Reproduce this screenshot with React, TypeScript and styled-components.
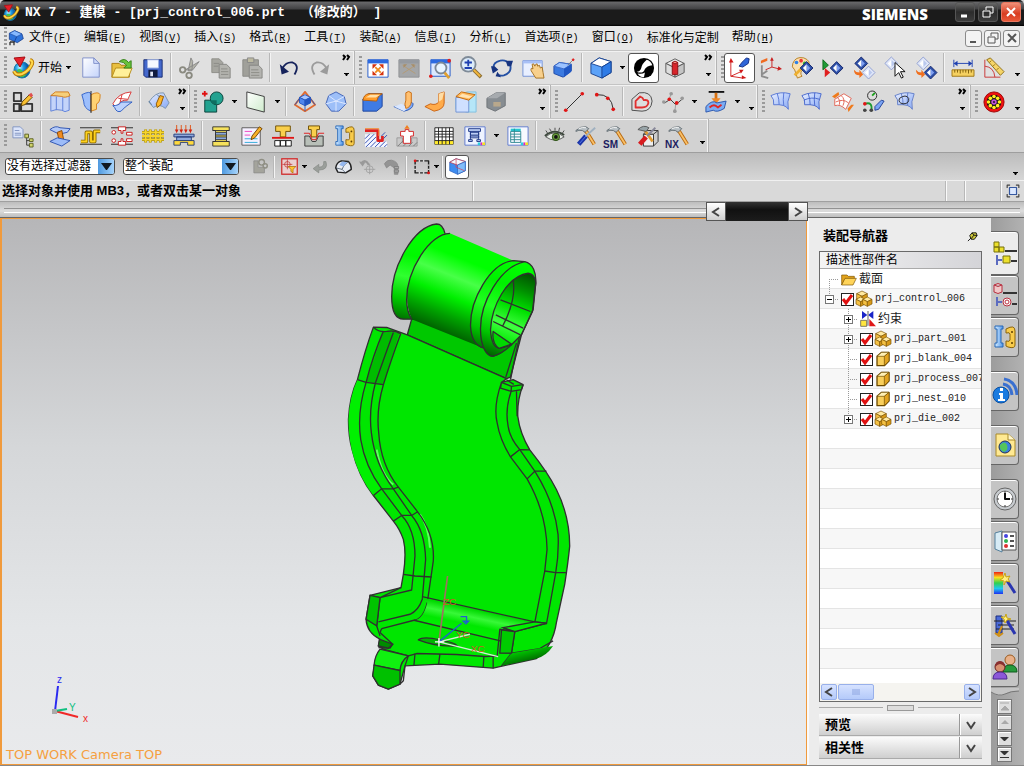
import React, { useState } from 'react';
import styled, { createGlobalStyle, css } from 'styled-components';

const sans = '"Liberation Sans", "Noto Sans CJK SC", sans-serif';
const mono = '"Liberation Mono", "Noto Sans CJK SC", monospace';

const Global = createGlobalStyle`
  html, body, #root { height: 100%; margin: 0; }
  * { box-sizing: border-box; }
  body { font: 12px/16px ${sans}; color: #000; overflow: hidden; background: #d6d6d6; }
  button, select, input { font: inherit; color: inherit; margin: 0; padding: 0; }
  button { border: 0; background: none; }
`;

/* ---------- icon data: [path, fill, stroke, stroke width] ---------- */
type Shape = [string, string?, string?, number?];
const o = (x: number, y: number, r: number) =>
  `M${x - r} ${y}a${r} ${r} 0 1 0 ${2 * r} 0a${r} ${r} 0 1 0 ${-2 * r} 0Z`;
const N = 'none';
const diamond = (x: number, y: number, pale = false): Shape[] => [
  [`M${x} ${y - 7}l7 7l-7 7l-7-7Z`, pale ? '#dfe6f8' : '#2d50a8', pale ? '#8d9cd0' : '#14246a'],
  [`M${x} ${y - 4}l4 4l-4 4Z`, pale ? '#b9c8ee' : '#7f9ff0'],
  [`M${x} ${y - 4}l-4 4l4 4Z`, '#fff'],
];
const cube = (x: number, y: number, s: number, a: string, b: string, c: string, line: string): Shape[] => [
  [`M${x} ${y - s}l${s} ${s / 2}l${-s} ${s / 2}l${-s} ${-s / 2}Z`, a, line],
  [`M${x - s} ${y - s / 2}l${s} ${s / 2}v${s}l${-s} ${-s / 2}Z`, b, line],
  [`M${x + s} ${y - s / 2}l${-s} ${s / 2}v${s}l${s} ${-s / 2}Z`, c, line],
];
const hammer: Shape[] = [
  ['M11 5L21 21', N, '#b8690f', 4],
  ['M11 5L21 21', N, '#f9c068', 2],
  ['M1 6q5-5 11-4l3 2l-4 4l-3-2q-4-1-7 1Z', '#b5bdc2', '#5f6a70'],
  ['M4 4q4-2 8-1', N, '#fff'],
];
const gridSheet = (line: string): Shape[] => [
  ['M1 5Q12 0 22 3Q18 12 20 20Q17 14 4 15Q5 9 1 5Z', 'url(#gSheet)', line],
  ['M8 3Q10 9 10 15M15 2Q14 10 15 16', N, line],
];
const globe: Shape[] = [
  [o(11, 14, 8), 'url(#gGlobe)', '#1a7fa8'],
  ['M6 14q4-3 6 2t5 1q-3 5-8 4Z', '#3fc653'],
  ['M3 15Q5 20 11 18Q18 15 21 8Q22 5 19 4', N, '#b97a08', 4],
  ['M3 15Q5 20 11 18Q18 15 21 8Q22 5 19 4', N, '#ffd84a', 2],
  ['M3 2L14 1L9 11Z', '#e8202a', '#a60d12'],
];
const clip: Shape[] = [
  ['M2 1h8v3h-2v14h2v4h-8v-4h2V4H2Z', 'url(#gBlue)', '#2768b8'],
  ['M13 4q9-5 9 2v14q0 4-7 2l-2-1v-5q4 1 4-1v-6q0-2-4-1Z', '#f8cb4c', '#8b640a'],
  [o(19, 7, 1), '#5e3f00'], [o(19, 18, 1), '#5e3f00'],
];

const icons: Record<string, Shape[]> = {
  globe,
  part: [['M2 5l8-4l11 5l2 7l-9 6l-12-5Z', '#2f74dc', '#0b2f7e'], ['M2 5l8-4l11 5l-8 4Z', '#86b8ff', '#1c4da4'], ['M13 10l-4 9', N, '#0b2f7e'], ['M3 18v5M3 18h6v5', N, '#333', 2]],
  new: [['M3 1h12l6 6v15H3Z', 'url(#gPaper)', '#7d8dc8'], ['M15 1v6h6Z', '#cfdafa', '#7d8dc8']],
  open: [['M1 7h8l2 2h9v13H1Z', '#e9c040', '#a87a0c'], ['M5 12h18l-4 10H1Z', '#fff09a', '#b58a18'], ['M9 5q6-5 10 1l3-2v8h-8l3-3q-3-4-8-4Z', '#69c23a', '#2f7d14']],
  save: [['M2 3h20v19H4l-2-2Z', '#4468cc', '#172a70'], ['M6 3h12v9H6Z', '#f5f8ff', '#9db0e0'], ['M7 14h10v8H7Z', '#111b3e'], ['M9 16h3v5H9Z', '#dfe5f5']],
  cut: [['M7 14L22 5l-7 9ZM10 15L13 1l2 4l-1 10Z', '#b3b3a8', '#888'], [o(4, 14, 3), N, '#8a8a80', 2], [o(11, 20, 3), N, '#8a8a80', 2]],
  copy: [['M2 2h8l4 4v11H2Z', '#a6a6a0', '#8b8b86'], ['M10 8h8l4 4v11H10Z', '#b3b3ae', '#868682'], ['M12 13h7M12 16h8M12 19h8M4 7h6M4 10h5', N, '#8b8b86']],
  paste: [['M2 3h17v18H2Z', '#a0a09a', '#8a8a84'], ['M7 1h7v5H7Z', '#bcb9a0', '#888'], ['M9 9h10l4 4v10H9Z', '#b4b4b0', '#858582'], ['M11 14h8M11 17h9M11 20h9', N, '#8b8b86']],
  undo: [['M5 12Q9 5 16 6Q24 9 18 19', N, '#16235c', 2], ['M2 8l2 11l8-3Z', '#16235c']],
  redo: [['M19 12Q15 5 8 6Q0 9 6 19', N, '#9b9b9b', 2], ['M22 8l-2 11l-8-3Z', '#9b9b9b']],
  fit: [['M1 3h22v19H1Z', '#fff', '#1c55c8'], ['M1 3h22v4H1Z', '#2c6ae0'], ['M9 11l6 6M15 11l-6 6', N, '#f08a1c', 2], ['M6 8h5l-5 5ZM18 8h-5l5 5ZM6 20h5l-5-5ZM18 20h-5l5-5Z', '#d63310']],
  fitsel: [['M1 3h22v19H1Z', '#a4a6a8', '#8f9194'], ['M1 3h22v4H1Z', '#969aa0'], ['M5 9l14 9M19 9L5 18', N, '#b59a72'], ['M6 8h4l-4 4ZM18 8h-4l4 4Z', '#a88e68']],
  zoomfit: [['M2 3h21v18H2Z', '#dbe8ff', '#1c55c8'], ['M2 3h21v4H2Z', '#2c6ae0'], [o(13, 12, 6), '#e8f4ff', '#7a8797', 2], ['M17 17l5 6', N, '#e0a030', 3], [o(2, 21, 2), '#e02020'], [o(22, 4, 2), '#e02020']],
  zoom: [[o(9, 8, 8), '#dcecfa', '#7f8b98', 2], ['M9 3v7M5 6h8M5 12h8', N, '#1d3fb0', 2], ['M15 14l8 8', N, '#8e7034', 4], ['M15 14l7 7', N, '#f3b73c', 2]],
  rotate: [['M3 15Q1 6 10 4Q14 3 17 5M21 9Q23 17 14 20Q10 21 7 19', N, '#2450a4', 2], ['M0 10l4 0l4 4l-6 4ZM16 4h8l-2 6l-4 0ZM11 22l-6-1l2-5Z', '#173480']],
  pan: [['M1 4h21v17H1Z', '#e8efff', '#6f8ed4'], ['M1 4h21v3H1Z', '#a8c0f6'], ['M10 15q-1-4 2-2l-1-5q2-2 3 2l1-2q2-2 2 2l2-1l1 3l2-1l1 6l1 6h-9Z', '#f8d08c', '#a26d1c']],
  persp: [['M1 10l6-4l13 2v7l-9 7l-10-4Z', '#3b7ae0', '#2049a6'], ['M1 10l6-4l13 2l-8 5Z', '#9cc3ff', '#3868c8'], ['M12 13v9l8-6v-8Z', '#1f57c4'], ['M16 9l6-6', N, '#777'], [o(22, 3, 1), '#e02020', '#e02020']],
  box: [['M1 7l9-6l13 4v12l-10 6l-12-5Z', '#5ca2f8', '#16418f'], ['M1 7l9-6l13 4l-10 6Z', '#fff', '#16418f'], ['M13 11v12l10-6V5Z', '#2f7ce6', '#16418f']],
  shade: [[o(12, 12, 11), '#000'], ['M15 3A9 9 0 0 1 21 9Q15 10 13 13Q12 17 8 17Q6 17 4 16Q8 16 9 12Q10 7 15 3Z', '#fff'], ['M13 16Q14 12 20 12Q20 19 13 21Z', '#000'], ['M5 18Q10 19 13 17L12 22Q7 22 5 18Z', '#fff']],
  section: [...cube(12, 12, 10, '#eee', '#ddd', '#c5c5c5', '#555'), ['M9 6h6v13H9Z', '#d8252b', '#8a0c10'], ['M9 6q3-3 6 0q-3 3-6 0', '#ff8a80', '#8a0c10']],
  csys: [['M2 4v17l13 2M2 21L13 16', N, '#d01818'], ['M0 6l2-5l3 5ZM11 14l5 0l-3 4ZM14 20l5 3l-5 1Z', '#d01818'], ['M11 10l3-4l5-5l3 1l-1 5l-6 4Z', '#2f65d8', '#132c80']],
  csys2: [['M13 2v9l8 2M13 11L6 14', N, '#c82020'], ['M2 9v12l7 2M2 19l6-4', N, '#8d8d8d', 2], ['M1 4l7-3v3l-7 3Z', '#ef6a20'], ['M11 4l2-4l2 4ZM20 10l4 3l-5 2Z', '#c82020']],
  palette: [['M2 7Q5-1 14 1Q22 4 19 10Q14 9 13 14Q9 17 12 21L7 23L4 14Q0 11 2 7Z', '#fae0ae', '#b57c20'], [o(6, 6, 2), '#2e80e8'], [o(11, 4, 2), '#e33'], [o(15, 7, 2), '#3a3'], ['M4 20l8-8', N, '#eeb030', 3], ...diamond(17, 12)],
  play: [['M1 3l6 6l-6 5Z', '#1f9a35', '#0d6a1c'], ['M3 12l6 5l-6 5Z', '#e02020'], ...diamond(16, 12)],
  swap: [...diamond(9, 7), ...diamond(17, 17, true), ['M1 14q2 3 6 3v-3l4 5l-4 4v-3q-6 0-6-6Z', '#f07020']],
  pick: [...diamond(8, 7, true), ['M12 6v15l4-4l3 6l2-1l-3-6h5Z', '#fff', '#000']],
  swap2: [...diamond(9, 7, true), ...diamond(17, 17), ['M1 14q2 3 6 3v-3l4 5l-4 4v-3q-6 0-6-6Z', '#f07020']],
  ruler: [['M2 3v8M22 3v8M2 7h20', N, '#1d3fb0'], ['M2 7l4-3v6ZM22 7l-4-3v6Z', '#1d3fb0'], ['M0 14h24v7H0Z', '#f5d060', '#9c7410'], ['M3 14v3M6 14v3M9 14v4M12 14v3M15 14v3M18 14v4M21 14v3', N, '#7a5a08']],
  angle: [['M2 3v19h17M2 10Q12 11 13 22', N, '#c83030'], ['M4 3l4-2l15 15l-4 4Z', '#f5d468', '#8b6a10'], ['M9 4l-2 2M13 8l-2 2M17 12l-2 2', N, '#8b6a10']],
  sketch: [['M2 2h8v9H2ZM2 14h6v8H2ZM10 14h12v8H10Z', N, '#333', 2], ['M11 12l8-8l3 3l-8 8l-4 1Z', '#f8c030', '#5c3c00'], ['M18 4l3-2l2 3l-2 2Z', '#e05050']],
  extrude: [['M2 5h20v16q-5 3-8 0q-6-2-12 1Z', '#c4d4fa', '#5b7ed8'], ['M2 5l5-4h14l2 4q-6 3-9 1q-6-1-12-1Z', '#f6cf7a', '#d17818'], ['M8 6v15M15 7v14', N, '#5b7ed8']],
  revolve: [['M2 4q10-5 10 0v18q-8-3-8-11Z', '#9dbffc', '#2e5fc8'], ['M12 4q8-4 10 0q0 9-4 10v6l-6 2Z', '#ffd272', '#d4801a'], ['M12 0v24', N, '#222']],
  sweep: [['M2 14Q8 2 22 1l-4 9Q10 9 6 18Z', '#fff', '#d83030'], ['M8 8l10 1M12 4l-2 8', N, '#d83030'], ['M2 16q7 0 9-4l12 0q-9 6-12 10Q6 24 4 18Z', '#bcd2fc', '#2858c0']],
  mesh: [['M1 12Q8 1 17 2l6 11l-4 6Q12 13 6 18Z', 'url(#gSheet)', '#7890a8'], ['M9 14l4-9l4 1l-3 9l-4 3Z', '#ffb628', '#8a5300'], ['M4 15l-3-4M10 4l3 3', N, '#587898']],
  unite: [['M3 10h13v13H3Z', '#22a290', '#083d36'], [o(16, 8, 7), '#22a290', '#083d36'], ['M9 10h7v5Q11 14 9 10Z', '#0d6f61'], ['M3 0v6M0 3h6', N, '#e01010', 2]],
  plane: [['M2 1l19 5v17L2 18Z', 'url(#gMint)', '#333']],
  pyramid: [['M12 1L1 15l11 7l11-7Z', N, '#e06a30', 2], ['M1 15l5-7M12 22v-6M23 15l-5-7', N, '#2b57b8'], ...cube(12, 10, 6, '#a7c6ff', '#4f86ec', '#2356c0', '#2356c0')],
  poly: [['M12 1l9 5l2 8l-8 8l-8 0l-6-8l3-9Z', '#9dbff8', '#3d5fb4'], ['M4 5l8 6l9-5M12 11l-11 3M12 11l11 3M12 11v11', N, '#e2ebff']],
  edge: [['M1 9l6-6h15v14l-6 5H1Z', '#3f7be4', '#1b429a'], ['M1 10q1-6 6-7h15q-5 2-6 8Z', '#ff9c2a', '#b65d08'], ['M4 7l5-3h11l-5 3Z', '#ffe0a8']],
  flange: [['M1 17l11 5q10-2 10-8q-2-4-8 2Z', '#7da8f4', '#2a58b8'], ['M1 17l8-3l8 4l-5 4Z', '#d8e6ff'], ['M14 2q3-3 6 0v10q-1 6-6 7q-2-5 0-9Z', '#ffc070', '#c86a10']],
  bend: [['M1 17l10 5q11-2 11-9V1l-6 2v9q-3 4-9 2Z', '#ffab4a', '#c86010'], ['M16 3l6-2l-2 8l-4 3Z', '#ffdca4']],
  corner: [['M1 8l12-7h10v22H13L1 20Z', '#b5e6f8', '#7fc0df'], ['M1 7h14v16H1Z', '#cfe0ff', '#6e90d2'], ['M1 6l6-5l15 3l-7 6Z', '#ffb95a', '#c36508'], ['M4 6l4-3l11 3l-4 2Z', '#ffe3b4']],
  block: [['M1 8l10-6h10v14l-11 6l-9-4Z', '#878d92', '#6f7377'], ['M1 8l10-6h10l-9 6Z', '#a6aaae'], ['M8 12h8v5H8Z', '#b9a88c']],
  line: [['M3 21L21 3', N, '#222'], [o(3, 21, 2), '#e01515'], [o(21, 3, 2), '#e01515']],
  arc: [['M3 4Q19 3 21 20', N, '#222'], [o(3, 4, 2), '#e01515'], [o(15, 8, 2), '#e01515'], [o(21, 20, 2), '#e01515']],
  offset: [['M1 21V9L9 2Q22 0 23 11Q22 22 12 22Z', '#ddd', '#444'], ['M5 18v-7l5-5q3 1 4 4q5-1 5 3q-1 5-7 5Z', N, '#e03030', 2]],
  spline: [['M3 13l6-4l6 6l8-7', N, '#333'], ['M8 9l2-7M15 14l-1 8M3 13l-2-2', N, '#999'], [o(2, 12, 2), '#999'], [o(22, 8, 2), '#999'], [o(10, 3, 2), '#999'], [o(14, 22, 2), '#999'], [o(8, 9, 2), '#e01515'], [o(16, 13, 2), '#e01515']],
  press: [['M4 1h17', N, '#111', 2], ['M12 2v7', N, '#d87010', 3], ['M7 8h10l-5 6Z', '#ee8828'], ['M1 17q7-8 12-4l10-2l-2 8q-8 5-12 2l-8 2Z', '#7dacf2', '#2552ab'], ['M5 18q5-5 9 0l4-3', N, '#e02525', 2]],
  sheet1: gridSheet('#5474d4'),
  sheet2: [...gridSheet('#4465cc'), ['M3 10Q12 6 20 9', N, '#4465cc']],
  sheet3: [['M3 9L13 3l8 5l-6 12Q9 14 3 16Z', '#fff', '#e06050'], ['M6 7q4 3 2 8M10 5q5 4 2 11M4 12q8-4 14 1', N, '#e06050'], ['M0 6l7-5l1 3l-5 4ZM24 15l-6 8l-1-4l4-4Z', '#ef7a1c']],
  measure: [[o(10, 5, 5), '#ddd', '#222'], ['M10 5l3-3', N, '#1aa01a', 2], ['M2 14Q11 11 9 22', N, '#1a9a30', 2], [o(2, 14, 2), '#e01515'], [o(2, 21, 2), '#444'], [o(9, 21, 2), '#444'], ['M13 17l7-7l3 1l-6 9l-4 1Z', '#7aa4f4', '#1c3c94']],
  sheet4: [...gridSheet('#5f7cc8'), ['M6 8q7-5 10 0q1 6-6 6q-6-1-4-6Z', N, '#222']],
  wheel: [[o(12, 12, 11), '#f01010', '#900'], [o(12, 12, 8), '#111'], ...[[12, 6], [16, 8], [18, 12], [16, 16], [12, 18], [8, 16], [6, 12], [8, 8]].map(([x, y]): Shape => [o(x, y, 2), '#ffee20']), [o(12, 12, 3), '#c050d8'], [o(12, 12, 1), '#111']],
  doctree: [['M1 2h8l3 3v9H1Z', '#dce5fa', '#7f92c0'], ['M3 6h5M3 9h7M3 11h7', N, '#7f92c0'], ['M16 12v10h4M16 17h4', N, '#333'], ['M14 10h4v4h-4ZM19 15h4v3h-4ZM19 20h4v4h-4Z', '#cfd36a', '#5b5f22']],
  die: [['M1 5Q7 0 12 3l11 1l-3 4l-9 2Z', '#b4caf8', '#2a50b0'], ['M9 8l5-2l2 10l-5 1Z', '#f08c20', '#8a4700'], ['M1 18l8-4l14 3l-9 6Z', '#9dbcf8', '#2a50b0']],
  strip: [['M0 3h24M0 21h24', N, '#222'], ['M1 18h6V8h5v10h4V7h6', N, '#8b6a00', 4], ['M1 18h6V8h5v10h4V7h6', N, '#ffd21e', 2]],
  layout: [['M0 3h24M0 21h24', N, '#222'], ['M8 2h8v4h-3v3h-2V6H8ZM8 22h8v-4h-3v-3h-2v3H8ZM17 8h6v3h-6ZM17 15h6v3h-6Z', '#fff', '#c81414'], [o(3, 8, 2), '#fff', '#c81414'], [o(3, 17, 2), '#fff', '#c81414']],
  strip2: [['M0 8h24M0 12h24M0 16h24M4 5v14M9 5v14M15 5v14M20 5v14', N, '#8a7400', 3], ['M0 8h24M0 12h24M0 16h24M4 5v14M9 5v14M15 5v14M20 5v14', N, '#f7d52e', 2]],
  load: [['M4 0v6M9 0v6M14 0v6M19 0v6', N, '#e05010'], ['M2 5h4l-2 4ZM7 5h4l-2 4ZM12 5h4l-2 4ZM17 5h4l-2 4Z', '#d02010'], ['M1 10h22v3H1ZM4 13h16v4H4Z', '#8fa9dc', '#223a78'], ['M1 17h22v5h-7v-3H8v3H1Z', '#ffd93c', '#223a78']],
  base: [['M3 2h18v4h-3v12h3v5H3v-5h3V6H3Z', '#f6e25c', '#333'], ['M6 8h12v3H6ZM6 13h12v3H6Z', '#89a8dc', '#333'], ['M3 6h18M3 18h18', N, '#333']],
  note: [['M1 3h20v19H1Z', '#f5f1ff', '#555'], ['M4 7h8M4 11h6', N, '#ef40c0'], ['M4 15h14M4 19h14', N, '#28a8d8'], ['M12 12l8-10l3 2l-8 10l-4 2Z', '#f9b128', '#6c4100']],
  punch: [['M4 1h16v6h-5v6H9V7H4Z', '#f9cf4c', '#6b4c00'], ['M0 14h24', N, '#e01515', 2], ['M3 17h6v6H3ZM15 17h6v6h-6ZM9 17h6v6H9Z', '#fff', '#111']],
  form: [['M6 1h12v4h-3v8H9V5H6Z', '#f9cf4c', '#6b4c00'], ['M2 12h5l3 6h4l3-6h5v11H2Z', '#b8bfb8', '#333'], ['M1 9h6l3 7h4l3-7h6', N, '#e01515']],
  clip,
  hatch: [['M0 10h12v8h12v6H0Z', '#f4f6ff'], ['M0 15l5-5M0 20L10 10M1 24L12 13M6 24l6-6M11 24l6-6M16 24l6-6M21 24l3-3M18 12l4-4M20 15l4-4', N, '#2a48b0'], ['M0 6h14v11h5v-5', N, '#e02020', 3], ['M0 4h15v8', N, '#f4862a']],
  insert: [['M1 14h6v5h10v-5h6v9H1Z', '#c9c9c9', '#999'], ['M2 23l6-6M8 23l4-4M14 23l4-4M19 23l4-4', N, '#777'], ['M5 7h5V5h4v2h5v5h-3v8H8v-8H5Z', '#fff', '#d42020'], ['M9 4l3-4l3 4Z', '#f08020']],
  table: [['M2 3h20v18H2Z', '#fff', '#222'], ['M2 17h20v4H2Z', '#ffe92c'], ['M2 7h20M2 10h20M2 13h20M2 17h20M6 3v18M10 3v18M14 3v18M18 3v18', N, '#222']],
  baselib: [['M1 2h22v20H1Z', '#eef3ff', '#5b77ce'], ['M5 4h13v3H5ZM7 8h9v3H7ZM7 12h9v2H7ZM5 16h4v2H5ZM14 16h4v2h-4ZM7 7v9M16 7v9', '#bed0f6', '#1e3786'], ['M15 19h3v3h-3Z', '#2ad0e0'], ['M18 19h2v3h-2Z', '#e020c0'], ['M20 19h3v3h-3Z', '#f8e020']],
  tablelib: [['M1 2h22v20H1Z', '#f6f9ff', '#5b77ce'], ['M4 4h11v3H4Z', '#28c8d0'], ['M4 7h11v12H4ZM4 10h11M4 13h11M4 16h11M8 4v15', N, '#2d8890'], ['M15 19h3v3h-3Z', '#2ad0e0'], ['M18 19h2v3h-2Z', '#e020c0'], ['M20 19h3v3h-3Z', '#f8e020']],
  eye: [['M2 13Q11 4 22 13Q12 20 2 13Z', '#e9efe9', '#555'], [o(13, 13, 4), '#6b9c3e', '#254a10'], [o(13, 13, 2), '#111'], ['M1 12Q11 3 22 11', N, '#3a463a', 2], ['M4 9L2 6M8 7L6 4M12 6V3M16 7l1-4M20 9l2-3', N, '#444']],
  tools: [...hammer, ['M4 21L12 12', N, '#1a34a8', 5], ['M5 20L12 12', N, '#5a7cf0'], ['M12 12l10-9', N, '#9fb0c0', 2]],
  hammer,
  kit: [['M7 10h11v13H7Z', '#eee', '#333'], ['M7 10l4-4h12v12l-5 5V10ZM18 10l5-4', '#ccc', '#333'], ['M8 5l9 13', N, '#e09a30', 3], ['M1 5q6-6 12-2l-3 4Z', '#98a4a8', '#555'], ['M3 21l7-8', N, '#d81c20', 5], ['M11 12l9-9', N, '#889', 2]],
  links: [['M4 4h6v9h9v8H4Z', '#a4a49c', '#888'], [o(15, 6, 4), N, '#8f8f84', 2], [o(20, 11, 3), N, '#8f8f84', 2]],
  snap: [['M1 1h22v22H1Z', '#ead0d0', '#d04040', 2], [o(9, 9, 4), N, '#c03030'], ['M9 2v14M2 9h14', N, '#c03030'], ['M10 12h11l-4 4v5l-3-2v-3Z', '#ffc430', '#a86d00']],
  back: [['M21 5q4 12-10 12v4L3 15l8-6v4q8 0 7-8Z', '#9b9f9b', '#858985']],
  eraser: [['M1 14Q2 6 9 4L19 5Q23 9 23 16L15 21L4 20Z', '#e8ecf4', '#222', 2], ['M1 14l9 2q1-6 9-11M10 16l5 5', N, '#345'], ['M10 5l8 1q-4 2-6 6l-6-2Z', '#95b8f0']],
  target: [['M3 8q6-8 11 2', N, '#999', 3], ['M0 5l5 7l4-6Z', '#999'], [o(15, 16, 5), N, '#999'], ['M15 8v15M7 16h16', N, '#999']],
  hand: [['M2 8q4-6 10-5q9 2 9 9v11h-5v-9l-6-4l-5 4Z', '#949494', '#858585'], ['M16 12h6v3h-6ZM16 17h6v3h-6Z', '#aaa', '#777']],
  marquee: [['M3 4h19v17H3Z', N, '#222', 2], ['M8 4h2M14 4h2M8 21h2M14 21h2M3 9v2M3 15v2M22 9v2M22 15v2', N, '#d6d6d6', 3], [o(3, 4, 2), '#e01515'], [o(22, 21, 2), '#e01515']],
  cubeSmall: [['M1 6l9-5l13 4v13l-11 5l-11-5Z', '#3d8cf0', '#2b62c0'], ['M1 6l9-5l13 4l-11 5Z', '#f4f8ff', '#c03040'], ['M12 10v13l11-5V5Z', '#82bdfa', '#2b62c0'], ['M10 1v12l12 5', N, '#d04058']],
  folder: [['M1 6h8l2 2h9v4H6l-5 9Z', '#e3a41c', '#7a5200'], ['M6 11h17l-5 10H1Z', '#ffd45a', '#7a5200']],
  asm: [...cube(9, 8, 8, '#ffe9a0', '#f5c143', '#d89a18', '#7a5200'), ...cube(7, 16, 7, '#ffe9a0', '#f5c143', '#d89a18', '#7a5200'), ...cube(17, 16, 7, '#ffe9a0', '#f5c143', '#d89a18', '#7a5200')],
  solid: [['M3 8l7-6h11v13l-7 7H3Z', '#f9cf5c', '#6d4b00', 2], ['M3 8l7-6h11l-7 6Z', '#fff0b4', '#6d4b00'], ['M14 8v14l7-7V2Z', '#e0a321', '#6d4b00']],
  constraint: [['M3 0v12l8-6ZM20 0v12l-8-6Z', '#1a25c8'], ['M11 0h2v22h-2Z', '#888'], ['M1 14h9v9H1Z', '#ffe640', '#444'], ['M14 12l10 11H14Z', '#e01818']],
  navAsm: [['M1 6h5v5H1ZM1 1h5v5H1ZM6 6h5v5H6Z', '#ece02c', '#77700c'], ['M12 10h12', N, '#333', 2], ['M4 14v10M4 19h5', N, '#5c6cc0', 2], ['M10 15h7v7h-7Z', '#ece02c', '#77700c'], ['M18 20h6', N, '#333', 2]],
  navCon: [['M1 2q4-3 8 0v7q-4 3-8 0ZM1 2q4 3 8 0', '#f0c8c8', '#b83040'], ['M10 10h14', N, '#333', 2], ['M4 14v9M4 19h5', N, '#5c6cc0', 2], [o(14, 19, 4), '#fff', '#b83040'], [o(14, 19, 2), N, '#b83040'], ['M19 21h5', N, '#333', 2]],
  info: [[o(8, 16, 8), '#1a7be0', '#0c4fa0'], ['M7 9h3v3H7ZM6 14h4v6h2v2H5v-2h2v-4H6Z', '#fff'], ['M10 5q8 1 9 11M11 0q12 2 13 16', N, '#3a70d0', 3]],
  web: [['M3 1h12l7 6v16H3Z', '#ffe992', '#a98a2a'], ['M15 1v6h7', '#fff6cc', '#a98a2a'], [o(12, 14, 6), '#3a7fe0', '#235'], ['M7 12q5-5 7 0t-3 7q-5-2-4-7Z', '#55c45a']],
  clock: [[o(12, 12, 11), '#c8ccd0', '#666'], [o(12, 12, 8), '#fff', '#777'], ['M12 6v6h5', N, '#111', 2], ['M12 4v2M12 18v2M4 12h2M18 12h2', N, '#333']],
  roles: [['M2 4l7-2v21l-7-3Z', '#d7ebf5', '#55809c'], ['M9 3h14v18H9Z', '#fff', '#555'], [o(13, 7, 2), '#4444e0'], [o(13, 12, 2), '#30b050'], [o(13, 17, 2), '#e03030'], ['M17 7h4M17 12h4M17 17h4', N, '#555', 2]],
  spectrum: [['M1 1h9v22H1Z', 'url(#gSpectrum)'], ['M13 8l9 14', N, '#2a35b0', 3], ['M12 2l1 4l4-1l-2 3l2 3l-4-1l-2 4v-4l-4-1l3-2Z', '#fff080', '#c9a414']],
  process: [['M3 3h6v17H3Z', '#4b6bd8', '#1b2c80'], ['M1 8h22M5 12h16M3 16h18', N, '#222'], ['M9 13l-4 9M2 20l4 3l4-3', N, '#d09018', 2], ['M13 6l9 15', N, '#2a35b0', 3], ['M13 1l1 4l4 1l-4 1l-2 3l-1-4l-3-2h4Z', '#fff080', '#c9a414']],
  people: [[o(17, 5, 5), '#e8b088', '#9a5c20'], ['M10 17q0-7 7-7t7 7Z', '#279a3c', '#0e5c1c'], [o(7, 12, 5), '#d89070', '#6a2020'], ['M2 12q0-6 5-6t5 6q-3-3-5-3t-5 3Z', '#8a3030'], ['M0 24q0-7 7-7t7 7Z', '#8c58d8', '#4d2a90']],
  fullscreen: [['M2 7V2h5M17 2h5v5M22 17v5h-5M7 22H2v-5', N, '#444', 2], ['M6 6h12v12H6Z', '#dbe8ff', '#3558a0', 2]],
  pin: [['M9 15L2 22', N, '#111', 2], ['M6 10l5-6h9l2 6l-6 8h-7Z', '#cfc93a', '#111', 2], ['M11 4l4 5l7 1M15 9l-6 8', N, '#111', 2]],
};

const Svg = styled.svg`display: block; flex: none; overflow: visible;`;
const Icon = ({ name, size = 24 }: { name: string; size?: number }) => (
  <Svg width={size} height={size} viewBox="0 0 24 24" aria-hidden>
    {icons[name].map(([d, f = 'none', s = 'none', w = 1], i) => (
      <path key={i} d={d} fill={f} stroke={s} strokeWidth={w} strokeLinejoin="round" />
    ))}
  </Svg>
);

const HiddenSvg = styled.svg`position: absolute;`;
const stops = (...c: string[]) => c.map((v, i) => <stop key={i} offset={i / (c.length - 1)} stopColor={v} />);
const Defs = () => (
  <HiddenSvg width="0" height="0" aria-hidden>
    <defs>
      <radialGradient id="gGlobe" cx=".35" cy=".35">{stops('#b8f4ff', '#1f9be0', '#0c55a8')}</radialGradient>
      <linearGradient id="gSheet" x2="1" y2="1">{stops('#eaf0ff', '#86a8f6')}</linearGradient>
      <linearGradient id="gBlue">{stops('#d8eeff', '#4f94e8')}</linearGradient>
      <linearGradient id="gPaper" x2="1" y2="1">{stops('#ffffff', '#c5d4fb')}</linearGradient>
      <linearGradient id="gMint" x2="1" y2="1">{stops('#ffffff', '#cfeccd')}</linearGradient>
      <linearGradient id="gSpectrum" x2="0" y2="1">{stops('#f02010', '#f8e020', '#30d050', '#20c8f0', '#2030f0')}</linearGradient>
    </defs>
  </HiddenSvg>
);

/* ---------- frame ---------- */
const Frame = styled.div`display: flex; flex-direction: column; height: 100vh; min-height: 600px; border-bottom: 1px solid #888;`;

const TitleBar = styled.header`
  display: flex; align-items: center; height: 26px; flex: none; padding: 0 3px 0 2px;
  background: linear-gradient(#000 0, #000 1px, #68686a 2px, #424244 9px, #1b1b1b 10px, #1b1b1b 24px, #000);
  color: #fff; border-radius: 5px 5px 0 0;
`;
const Title = styled.h1`flex: 1; margin: 0 0 0 5px; font: bold 13px/20px ${mono}; white-space: pre;`;
const Brand = styled.span`font: 800 15px/20px "Open Sans", sans-serif; margin-right: 24px; padding-top: 2px;`;
const WinButton = styled.button<{ $close?: boolean }>`
  width: 20px; height: 20px; margin: -3px 0 0 3px; display: grid; place-items: center;
  border: 1px solid ${p => (p.$close ? '#e8765e' : '#555')}; border-radius: 3px;
  background: ${p => (p.$close ? 'linear-gradient(#f09078, #d83c20 60%, #e85838)' : 'linear-gradient(#686868, #2c2c2c 50%, #3c3c3c)')};
`;

const MenuBar = styled.nav`
  display: flex; align-items: center; height: 24px; flex: none; padding: 0 4px 0 0;
  background: #e7e7e7;
`;
const MenuIcon = styled.span`display: flex; margin: 0 5px 0 1px;`;
const Menus = styled.div`display: flex; flex: 1; gap: 13px;`;
const MenuItem = styled.button`
  font-size: 12px; line-height: 16px; white-space: nowrap;
  span { font: 10px/16px ${mono}; }
`;
const DocButton = styled.button`
  width: 17px; height: 17px; margin-left: 2px; display: grid; place-items: center;
  border: 1px solid #8a8a8a; border-radius: 3px; background: #f3f3f3;
`;

const Row = styled.div<{ $tone: string }>`
  display: flex; height: 34px; flex: none;
  border-top: 1px solid #c4c4c4; box-shadow: inset 0 1px #f2f2f2; background: ${p => p.$tone};
`;
const Group = styled.div<{ $w?: number }>`
  display: flex; align-items: center; min-width: 0;
  ${p => (p.$w ? css`flex: 0 0 ${p.$w}px;` : css`flex: 1;`)}
  border-right: 1px solid #b4b4b4; box-shadow: inset -1px 0 #f2f2f2;
  &:last-child { border-right: 0; box-shadow: none; }
`;
const Grip = styled.i`
  width: 3px; height: 23px; margin: 0 0 0 4px; flex: none;
  background: repeating-linear-gradient(#9a9a9a 0 2px, transparent 2px 4px);
`;
const Tool = styled.button<{ $on?: boolean; $small?: boolean }>`
  position: relative; display: grid; place-items: center; flex: none;
  width: ${p => (p.$small ? 24 : 31)}px; height: ${p => (p.$small ? 24 : 30)}px;
  ${p => p.$on && css`background: #fff; border: 1px solid #555; border-radius: 3px;`}
`;
const Tag = styled.span`
  position: absolute; left: 2px; bottom: 1px; font: bold 10px/10px ${sans}; color: #1c1c60;
`;
const Sep = styled.i<{ $h: number }>`
  flex: none; width: 2px; height: ${p => p.$h}px; margin: 0 2px; background: #f4f4f4; border-left: 1px solid #b8b8b8;
`;
const Drop = styled.button<{ $w: number }>`
  flex: none; width: ${p => p.$w}px; height: 24px; display: grid; place-items: center;
`;
const More = styled.button<{ $bare?: boolean }>`
  display: flex; flex-direction: column; align-items: center; justify-content: space-between; align-self: flex-start;
  flex: none; width: 16px; height: 23px; margin: 3px 0 0 ${p => (p.$bare ? '0' : 'auto')};
  svg:only-child { margin-top: auto; }
`;
const StartButton = styled.button`
  display: flex; align-items: center; gap: 3px; width: 68px; flex: none; padding-left: 4px; white-space: nowrap;
`;

const Tri = () => <Svg width="7" height="4"><path d="M1 0h5v1H5L4 3H3L2 1H1Z" fill="#000" /></Svg>;
const Chevrons = () => <Svg width="9" height="7"><path d="M1 1l2 2L1 6M5 1l2 2L5 6" fill="none" stroke="#000" strokeWidth="2" /></Svg>;
const Overflow = ({ bare }: { bare?: boolean }) => (
  <More aria-label="More commands" $bare={bare}>{!bare && <Chevrons />}<Tri /></More>
);

const tags: Record<string, string> = { 'hammer:SM': 'SM', 'hammer:NX': 'NX' };
const Tools = ({ items, small }: { items: string; small?: boolean }) => (
  <>
    {items.split(' ').map((item, i) => {
      if (item === '|') return <Sep key={i} $h={small ? 22 : 29} />;
      if (item === 'v') return <Drop key={i} $w={small ? 6 : 12} aria-label="Options"><Tri /></Drop>;
      const on = item[0] === '*';
      const name = on ? item.slice(1) : item;
      return (
        <Tool key={i} $on={on} $small={small} aria-label={name} aria-pressed={on || undefined}>
          <Icon name={name.split(':')[0]} size={small ? 17 : 22} />
          {tags[name] && <Tag>{tags[name]}</Tag>}
        </Tool>
      );
    })}
  </>
);

const FilterBar = styled.div`
  display: flex; align-items: center; height: 28px; flex: none; padding-left: 5px;
  border-top: 1px solid #9e9e9e; background: linear-gradient(#bcbcbc, #d6d6d6);
  ${More} { margin-left: auto; margin-right: 1px; margin-top: 0; }
`;
const SelectBox = styled.label<{ $w: number }>`
  position: relative; display: flex; width: ${p => p.$w}px; margin-right: 8px; flex: none;
  select {
    appearance: none; width: 100%; height: 17px; padding: 0 0 0 1px; font-size: 12px; line-height: 15px;
    border: 1px solid #4a4a4a; border-radius: 3px; background: #fff; outline: 0;
  }
`;
const SelectArrow = styled.span`
  position: absolute; top: 1px; right: 1px; width: 16px; height: 15px; display: grid; place-items: center;
  border-radius: 0 2px 2px 0; background: linear-gradient(90deg, #4f9ae0, #a5d3fb); pointer-events: none;
`;
const FilterSelect = ({ label, width, options }: { label: string; width: number; options: string[] }) => (
  <SelectBox $w={width}>
    <select aria-label={label}>{options.map(v => <option key={v}>{v}</option>)}</select>
    <SelectArrow><Svg width="11" height="7"><path d="M0 0h11L6 7H5Z" fill="#101820" /></Svg></SelectArrow>
  </SelectBox>
);

const CueBar = styled.div`
  display: flex; align-items: stretch; height: 22px; flex: none; background: #d9d9d9;
  border-top: 1px solid #f0f0f0; border-bottom: 1px solid #a0a0a0;
`;
const CueText = styled.p`flex: 0 0 473px; margin: 0; padding-left: 2px; white-space: pre; font: bold 13px/20px ${sans};`;
const StatusCell = styled.div<{ $w?: number }>`
  ${p => (p.$w ? css`flex: 0 0 ${p.$w}px;` : css`flex: 1;`)}
  border-left: 1px solid #fafafa; box-shadow: -1px 0 #b8b8b8; display: grid; place-items: center;
`;
const Rail = styled.div`
  position: relative; height: 16px; flex: none; padding: 6px 4px 0; border-bottom: 1px solid #666;
  background: linear-gradient(#bdbdbd, #dcdcdc 60%, #bfbfbf);
  &::before { content: ''; display: block; height: 3px; border-top: 1px solid #929292; border-bottom: 1px solid #fff; }
`;
const RailHandle = styled.div`
  position: absolute; right: 216px; top: 0; z-index: 2; display: flex; width: 102px; height: 19px;
  background: linear-gradient(#333, #111 40%, #1c1c1c);
  justify-content: space-between;
`;
const RailButton = styled.button`
  width: 20px; display: grid; place-items: center; border: 1px solid #555; background: linear-gradient(#fff, #cfcfcf);
`;
const Chevron = ({ dir }: { dir: 'left' | 'right' | 'down' }) => (
  <Svg width="10" height="10">
    <path d={dir === 'left' ? 'M8 1L2 5l6 4' : dir === 'right' ? 'M2 1l6 4l-6 4' : 'M1 2l4 6l4-6'} fill="none" stroke="#444" strokeWidth="2" />
  </Svg>
);

const Main = styled.main`display: flex; flex: 1; min-height: 0; background: #ececec;`;
const Viewport = styled.section`
  position: relative; flex: 1; min-width: 0; overflow: hidden; border: 1px solid #f09a3c; border-left-width: 2px;
  display: flex; flex-direction: column; justify-content: flex-end;
  background: linear-gradient(#b6b6b8, #d5d7d9 42%, #e4e6e8 75%, #e9eaec);
`;
const Scene = styled.svg`position: absolute; inset: 0; width: 100%; height: 100%;`;
const Triad = styled.svg`display: block; margin-left: 40px; font: 10px ${sans};`;
const CameraLabel = styled.p`margin: 18px 0 0 4px; font: 13px/18px "DejaVu Sans", sans-serif; color: #f5a040;`;

const K = { fill: 'none', stroke: '#303030', strokeWidth: 4, strokeLinejoin: 'round' as const };
const Model = () => (
  <Scene viewBox="2 219 804 546" role="img" aria-label="prj_control_006">
    <defs>
      <linearGradient id="barrel" gradientUnits="userSpaceOnUse" x1="430" y1="80" x2="320" y2="350">
        {stops('#00ff00', '#00ff00', '#48ff48', '#00f000', '#00a000', '#005800')}
      </linearGradient>
      <linearGradient id="rim" gradientUnits="userSpaceOnUse" x1="250" y1="50" x2="190" y2="300">
        {stops('#00ff00', '#00f800', '#30ff30', '#00d000', '#007000')}
      </linearGradient>
      <linearGradient id="rimR" gradientUnits="userSpaceOnUse" x1="540" y1="130" x2="430" y2="410">
        {stops('#00ff00', '#00f000', '#20ff20', '#00c800', '#005000')}
      </linearGradient>
      <linearGradient id="bore" gradientUnits="userSpaceOnUse" x1="570" y1="160" x2="490" y2="370">
        {stops('#005000', '#009000', '#00e000', '#40ff40', '#00e800')}
      </linearGradient>
      <linearGradient id="tray" gradientUnits="userSpaceOnUse" x1="400" y1="1170" x2="385" y2="1240">
        {stops('#00d800', '#38f838', '#00e800', '#00f000')}
      </linearGradient>
      <linearGradient id="under" gradientUnits="userSpaceOnUse" x1="550" y1="1290" x2="560" y2="1330">
        {stops('#00d000', '#006800')}
      </linearGradient>
    </defs>
    <g transform="translate(340 220) scale(.33333)">
      {/* neck between barrel and plate */}
      <path d="M215 298L202 345L500 477L512 472L545 345L450 300Z" {...K} fill="#00c800" />
      <path d="M530 370L498 472M540 345L512 480" {...K} />
      {/* plate with both flanges */}
      <path d="M100 322L140 323L202 345L500 477L485 488L520 480L550 495Q532 540 534 590Q540 640 570 691Q625 760 650 810Q690 890 690 980Q685 1030 675 1095L650 1210Q640 1280 590 1318L490 1340L460 1347L300 1335L195 1340L180 1395L145 1410L115 1398L98 1370L105 1330L130 1290L115 1280L120 1260Q80 1240 78 1200L90 1128L183 1105L190 1065Q200 1000 190 960Q180 930 160 905L100 828Q55 770 36 690Q25 650 25 600Q28 530 52 480Q75 390 100 322Z" {...K} fill="#00e600" />
      <path d="M130 334L178 340L130 495L78 488Z" fill="#00bc00" />
      <path d="M52 480L78 488Q60 540 58 610Q62 680 90 745L125 808L100 828Q25 730 25 600Q28 530 52 480Z" fill="#00f000" />
      <path d="M110 690Q125 770 160 795M240 885Q266 920 270 985" fill="none" stroke="#60ff60" strokeWidth="6" />
      <path d="M100 322Q115 338 140 335Q165 330 182 342M130 334Q98 410 78 488Q50 580 62 660Q75 740 125 808L185 888Q225 930 225 1010L215 1112L120 1135L183 1105" {...K} />
      <path d="M160 338Q130 420 106 490Q85 570 94 640Q105 735 160 808L215 888Q255 935 257 1020L247 1140Q235 1175 210 1185L115 1208M182 342Q150 430 130 495Q108 570 116 640Q122 735 175 803L233 877Q285 945 280 1025L262 1150Q250 1200 222 1203L125 1228" {...K} />
      <path d="M52 480L78 488L130 495M100 828L125 808L160 808L175 803M160 905L185 888L215 888L233 877M190 1065L225 1070L275 1073M90 1128L120 1135L110 1220L120 1250M78 1200L110 1208" {...K} />
      {/* right flange */}
      <path d="M485 488Q460 560 472 610Q480 660 512 712L562 778Q620 880 622 990L615 1055L585 1210M514 515Q495 570 505 620Q510 655 540 690L585 755Q645 850 655 945Q658 1000 648 1060L620 1215M485 488L482 505L514 515L545 510L550 495M485 488L515 500L550 495M515 500L514 515M500 480L522 494" {...K} />
      <path d="M512 712L540 690L570 691M562 778L585 755L620 755M615 1055L648 1060L680 1060M530 515L532 590" {...K} />
      {/* tray */}
      <path d="M262 1150Q250 1200 222 1203L440 1255L485 1266L490 1225L585 1208L247 1135Z" fill="url(#tray)" />
      <path d="M247 1132L585 1208L620 1212M222 1203L485 1266M125 1228L120 1240L158 1275L150 1287L115 1285M130 1290L205 1310L230 1303L350 1306L435 1312L472 1311L480 1230L525 1237L620 1212M490 1225L525 1237L515 1302L485 1340M480 1300L515 1302L600 1288L640 1265" {...K} />
      <path d="M515 1302L640 1280Q620 1310 590 1318L485 1340Z" fill="url(#under)" />
      <path d="M490 1225L585 1208L620 1212L525 1237Z" fill="#00f000" stroke="#303030" strokeWidth="4" />
      <path d="M485 1232L525 1237L515 1302L480 1302Z" fill="#00cc00" stroke="#303030" strokeWidth="4" />
      <path d="M115 1280L118 1260L158 1275L145 1287Z" fill="#008c00" stroke="#303030" strokeWidth="4" />
      <path d="M90 1128L120 1135L110 1220L78 1200Z" fill="#00c400" stroke="#303030" strokeWidth="4" />
      <path d="M120 1290Q104 1310 102 1338L180 1354Q182 1325 205 1310Z" fill="#10f010" stroke="#303030" strokeWidth="4" />
      <path d="M102 1338L180 1354L180 1395L145 1410L115 1398L98 1370Z" fill="#00c000" stroke="#303030" strokeWidth="4" />
      <path d="M195 1340L205 1310M225 1303L222 1338M300 1305L296 1335M432 1312L430 1344M460 1312L460 1347M180 1395L190 1385L195 1340" {...K} />
      <path d="M235 1262Q250 1250 300 1262Q345 1270 352 1280Q290 1284 235 1262Z" {...K} fill="#00b400" />
      {/* barrel */}
      <path d="M330 40L520 122L430 385L215 298C170 200 240 30 330 40Z" fill="url(#barrel)" />
      <path d="M290 12Q310 20 315 40L330 40C270 40 200 150 200 240Q200 275 215 298L190 298C165 298 155 270 155 230C155 140 220 20 290 12Z" fill="url(#rim)" />
      <path d="M520 122L555 125C480 140 420 250 422 330Q422 360 432 385Q395 380 392 320C390 240 450 130 520 122Z" fill="url(#rimR)" />
      <path d="M555 125C580 130 590 160 588 190L580 270L545 345L515 375Q480 410 460 410C440 410 422 380 422 330C420 250 480 140 555 125Z" fill="url(#rimR)" />
      <path d="M565 160C582 162 588 180 588 190L578 275L545 345L515 375Q490 385 480 385Q455 385 452 330C455 260 500 170 565 160Z" {...K} fill="url(#bore)" />
      <path d="M460 335L515 373L478 386Q455 370 460 335Z" {...K} fill="#00d800" />
      <path d="M315 40Q308 12 290 12C220 20 155 140 155 230C155 270 165 298 190 298L215 298M330 40C270 40 200 150 200 240Q200 275 215 298M520 122C450 130 390 240 392 320Q395 375 432 385M520 122L555 125C480 140 420 250 422 330C422 380 440 410 460 410Q490 400 515 375M555 125C580 130 590 160 588 190L580 270L545 345" {...K} />
      <path d="M520 180Q530 240 488 320M482 240L572 275M468 285L550 325M460 305L542 345" {...K} />
      {/* work coordinate system */}
      <path d="M323 1070L297 1268" stroke="#a07060" strokeWidth="5" />
      <path d="M297 1268L390 1245M297 1268L475 1312" stroke="#d8e8d8" strokeWidth="4" />
      <path d="M297 1268L365 1212M362 1192h18v20M370 1206h16l-8 8Z" fill="none" stroke="#2060d0" strokeWidth="4" />
      <path d="M285 1268h28M297 1256v26" stroke="#fff" strokeWidth="4" />
    </g>
    <g fill="#c85a28" fontFamily="Liberation Sans" fontSize="10">
      <text x="443" y="606">ZC</text><text x="456" y="639">YC</text><text x="471" y="653">XC</text>
    </g>
  </Scene>
);

/* ---------- navigator ---------- */
const Side = styled.aside`
  display: flex; flex-direction: column; flex: 0 0 184px; min-width: 0; overflow: hidden;
  padding: 6px 9px 5px 10px; border-left: 2px solid #fafafa;
`;
const PanelHead = styled.div`display: flex; align-items: center; justify-content: space-between; height: 27px; padding: 0 4px 3px; flex: none;`;
const PanelTitle = styled.h2`margin: 0; font: bold 13px/20px ${sans};`;
const PlainButton = styled.button`display: grid; place-items: center;`;
const TreeBox = styled.div`
  flex: 1; min-height: 0; display: flex; flex-direction: column; border: 1px solid #6a6a6a;
  background: #fff; overflow: hidden;
`;
const TreeHead = styled.div`
  height: 17px; flex: none; padding-left: 6px; border-bottom: 1px solid #aaa; line-height: 16px; white-space: nowrap;
  background: linear-gradient(90deg, #f4f4f4, #d4d4d8);
`;
const TreeBody = styled.div`
  flex: 1; min-height: 0; overflow: hidden;
  background: repeating-linear-gradient(#fff 0 19px, #e4e4e4 19px 20px, #f7f7f7 20px 39px, #e4e4e4 39px 40px);
`;
const TreeRow = styled.div<{ $level: number }>`
  display: flex; align-items: center; height: 20px; padding-left: ${p => p.$level * 19}px; white-space: nowrap;
  font: 10px/20px ${mono}; color: #222;
`;
const Twist = styled.button`width: 21px; height: 20px; flex: none;`;
const Check = styled.span`
  position: relative; display: flex; flex: none; width: 15px;
  input { appearance: none; width: 13px; height: 13px; border: 1px solid #222; background: #fff; }
  svg { position: absolute; left: 1px; top: 1px; pointer-events: none; }
`;
const NodeName = styled.label<{ $cjk?: boolean }>`margin-left: 3px; ${p => p.$cjk && css`font: 12px/18px ${sans}; margin-left: 2px;`}`;
const dots = { stroke: '#999', strokeDasharray: '1 1' };

type Node = { level: number; icon: string; name: string; box?: boolean; exp?: '+' | '-'; last?: boolean };
const nodes: Node[] = [
  { level: 0, icon: 'folder', name: '截面' },
  { level: 0, icon: 'asm', name: 'prj_control_006', box: true, exp: '-' },
  { level: 1, icon: 'constraint', name: '约束', exp: '+' },
  { level: 1, icon: 'asm', name: 'prj_part_001', box: true, exp: '+' },
  { level: 1, icon: 'solid', name: 'prj_blank_004', box: true },
  { level: 1, icon: 'solid', name: 'prj_process_007', box: true },
  { level: 1, icon: 'solid', name: 'prj_nest_010', box: true },
  { level: 1, icon: 'asm', name: 'prj_die_002', box: true, exp: '+', last: true },
];
const TreeNode = ({ n, i }: { n: Node; i: number }) => {
  const [on, setOn] = useState(true);
  return (
    <TreeRow $level={n.level}>
      <Twist aria-label={n.exp ? 'Toggle ' + n.name : 'Branch'} tabIndex={n.exp ? 0 : -1}>
        <Svg width="21" height="20" shapeRendering="crispEdges">
          <path d="M9 10h10" {...dots} />
          <path d={i === 0 ? 'M9 10v10' : i === 1 || n.last ? 'M9 0v10' : 'M9 0v20'} {...dots} />
          {n.exp && <path d="M5 6h8v8H5Z" fill="#fff" stroke="#777" />}
          {n.exp && <path d={n.exp === '+' ? 'M7 10h5M9 8v5' : 'M7 10h5'} stroke="#000" />}
        </Svg>
      </Twist>
      {n.box && (
        <Check>
          <input type="checkbox" id={'n' + i} checked={on} onChange={() => setOn(!on)} />
          {on && <Svg width="11" height="11"><path d="M1 5l3 4l6-8" fill="none" stroke="#e01010" strokeWidth="3" /></Svg>}
        </Check>
      )}
      <Icon name={n.icon} size={16} />
      <NodeName htmlFor={n.box ? 'n' + i : undefined} $cjk={!n.box}>{n.name}</NodeName>
    </TreeRow>
  );
};

const ScrollRow = styled.div`display: flex; height: 18px; flex: none; padding: 1px; background: #f5f4f0;`;
const ScrollButton = styled.button<{ $thumb?: boolean }>`
  width: ${p => (p.$thumb ? 36 : 16)}px; display: grid; place-items: center; border: 1px solid #98b0ea; border-radius: 2px;
  background: linear-gradient(#d6e2ff, #b4cafa); margin-right: 1px;
  &:last-child { margin: 0 0 0 auto; }
`;
const Splitter = styled.div`
  height: 11px; flex: none; display: flex; align-items: center; gap: 4px; margin-bottom: 1px;
  &::before, &::after { content: ''; flex: 1; border-top: 1px solid #aaa; }
  i { width: 27px; height: 6px; border: 1px solid #999; background: #ddd; }
`;
const Fold = styled.button`
  display: flex; align-items: center; height: 22px; flex: none; margin-bottom: 1px; text-align: left;
  font: bold 13px/20px ${sans}; border-bottom: 1px solid #aaa; background: linear-gradient(#fbfbfb, #cfcfcf);
  span { flex: 1; padding-left: 6px; }
  svg { margin: 0 6px; }
`;
const FoldArrow = styled.em`align-self: stretch; display: flex; align-items: center; border-left: 1px solid #999; box-shadow: inset 1px 0 #fff;`;

const Dock = styled.nav`
  flex: 0 0 33px; display: flex; flex-direction: column; background: linear-gradient(90deg, #9c9c9c, #b2b2b2); padding-top: 13px;
`;
const DockTab = styled.button<{ $on?: boolean; $gap?: boolean }>`
  width: 28px; height: ${p => (p.$on ? 44 : 40)}px; flex: none; margin: ${p => (p.$gap ? 14 : p.$on ? 0 : 2)}px 0 ${p => (p.$on ? -2 : 0)}px 0;
  display: grid; place-items: center; border: 1px solid #666; border-left: 0; border-radius: 0 4px 4px 0;
  background: ${p => (p.$on ? '#ececec' : '#c4c4c4')}; box-shadow: inset 0 1px #fff;
  overflow: hidden;
`;
const DockNav = styled.div`
  display: flex; flex-direction: column; gap: 1px; margin: 2px 0 0 6px;
  button { width: 15px; height: 15px; display: grid; place-items: center; border: 1px solid #777; background: #dedede; box-shadow: inset 1px 1px #fff; }
`;

const menus = [['文件', 'F'], ['编辑', 'E'], ['视图', 'V'], ['插入', 'S'], ['格式', 'R'], ['工具', 'T'], ['装配', 'A'], ['信息', 'I'], ['分析', 'L'], ['首选项', 'P'], ['窗口', 'O'], ['标准化与定制', ''], ['帮助', 'H']];
const Glyph = ({ d, color, w = 2 }: { d: string; color: string; w?: number }) => (
  <Svg width="12" height="12"><path d={d} fill="none" stroke={color} strokeWidth={w} /></Svg>
);
const MIN = 'M2 10h6';
const RESTORE = 'M4 4V1h7v6H8M1 5h7v6H1Z';
const CLOSE = 'M2 2l8 8M10 2l-8 8';

export default function App() {
  return (
    <Frame>
      <Global />
      <Defs />
      <TitleBar>
        <Icon name="globe" size={18} />
        <Title>{'NX 7 - 建模 - [prj_control_006.prt  （修改的） ]'}</Title>
        <Brand>SIEMENS</Brand>
        <WinButton aria-label="Minimize"><Glyph d={MIN} color="#fff" w={3} /></WinButton>
        <WinButton aria-label="Restore"><Glyph d={RESTORE} color="#fff" w={1} /></WinButton>
        <WinButton aria-label="Close" $close><Glyph d={CLOSE} color="#fff" /></WinButton>
      </TitleBar>
      <MenuBar>
        <Grip />
        <MenuIcon><Icon name="part" size={16} /></MenuIcon>
        <Menus>
          {menus.map(([t, k]) => (
            <MenuItem key={t}>{t}{k && <span>(<u>{k}</u>)</span>}</MenuItem>
          ))}
        </Menus>
        <DocButton aria-label="Minimize part"><Glyph d={MIN} color="#555" /></DocButton>
        <DocButton aria-label="Restore part"><Glyph d={RESTORE} color="#555" w={1} /></DocButton>
        <DocButton aria-label="Close part"><Glyph d={CLOSE} color="#555" /></DocButton>
      </MenuBar>

      <Row $tone="#e0e0e0">
        <Group $w={355}>
          <Grip />
          <StartButton><Icon name="globe" /><span>开始</span><Tri /></StartButton>
          <Tools items="new open save | cut copy paste | undo redo" />
          <Overflow />
        </Group>
        <Group $w={362}>
          <Grip />
          <Tools items="fit fitsel zoomfit zoom rotate pan persp | box v *shade section" />
          <Overflow />
        </Group>
        <Group>
          <Grip />
          <Tools items="*csys csys2 palette play swap pick swap2 | ruler angle" />
          <Overflow bare />
        </Group>
      </Row>
      <Row $tone="#dadada">
        <Group $w={190}>
          <Grip />
          <Tools items="sketch | extrude revolve sweep | mesh" />
          <Overflow />
        </Group>
        <Group $w={361}>
          <Grip />
          <Tools items="unite v plane v | pyramid poly | edge flange bend corner block" />
          <Overflow />
        </Group>
        <Group $w={207}>
          <Grip />
          <Tools items="line arc | offset spline v press v" />
          <Overflow bare />
        </Group>
        <Group $w={213}>
          <Grip />
          <Tools items="sheet1 sheet2 sheet3 measure sheet4" />
          <Overflow />
        </Group>
        <Group>
          <Grip />
          <Tools items="wheel" />
          <Overflow bare />
        </Group>
      </Row>
      <Row $tone="#d2d2d2">
        <Group $w={709}>
          <Grip />
          <Tools items="doctree | die strip layout strip2 load | base note punch form clip hatch insert | table baselib v tablelib | eye tools hammer:SM kit hammer:NX" />
          <Overflow bare />
        </Group>
        <Group />
      </Row>

      <FilterBar>
        <FilterSelect label="Type filter" width={110} options={['没有选择过滤器']} />
        <FilterSelect label="Selection scope" width={116} options={['整个装配']} />
        <Tools small items="links | snap v back eraser target hand | marquee v | *cubeSmall" />
        <More aria-label="More commands"><Tri /></More>
      </FilterBar>

      <CueBar>
        <CueText>{'选择对象并使用 MB3，或者双击某一对象'}</CueText>
        <StatusCell />
        <StatusCell $w={19} />
        <StatusCell $w={36} />
        <StatusCell $w={23}><PlainButton aria-label="Full screen"><Icon name="fullscreen" size={14} /></PlainButton></StatusCell>
      </CueBar>
      <Rail>
        <RailHandle>
          <RailButton aria-label="Dock left"><Chevron dir="left" /></RailButton>
          <RailButton aria-label="Dock right"><Chevron dir="right" /></RailButton>
        </RailHandle>
      </Rail>

      <Main>
        <Viewport>
          <Model />
          <Triad width="60" height="56" viewBox="42 672 60 56">
            <path d="M55 711L58 686" stroke="#2a2af0" strokeWidth="2" />
            <path d="M55 711L78 717" stroke="#f02828" strokeWidth="2" />
            <path d="M55 711L67 709" stroke="#10c080" strokeWidth="2" />
            <path d="M52 709h5v5h-5Z" fill="#aaa" />
            <text x="57" y="683" fill="#2a2af0">z</text>
            <text x="69" y="711" fill="#10c080">Y</text>
            <text x="83" y="722" fill="#f02828">x</text>
          </Triad>
          <CameraLabel>TOP WORK Camera TOP</CameraLabel>
        </Viewport>
        <Side>
          <PanelHead>
            <PanelTitle>装配导航器</PanelTitle>
            <PlainButton aria-label="Pin panel"><Icon name="pin" size={11} /></PlainButton>
          </PanelHead>
          <TreeBox>
            <TreeHead>描述性部件名</TreeHead>
            <TreeBody>{nodes.map((n, i) => <TreeNode key={n.name} n={n} i={i} />)}</TreeBody>
            <ScrollRow>
              <ScrollButton aria-label="Scroll left"><Chevron dir="left" /></ScrollButton>
              <ScrollButton $thumb aria-label="Scroll thumb"><Svg width="8" height="6"><path d="M1 0v6M3 0v6M5 0v6M7 0v6" stroke="#8ca4e0" /></Svg></ScrollButton>
              <ScrollButton aria-label="Scroll right"><Chevron dir="right" /></ScrollButton>
            </ScrollRow>
          </TreeBox>
          <Splitter><i /></Splitter>
          {['预览', '相关性'].map(t => (
            <Fold key={t}><span>{t}</span><FoldArrow><Chevron dir="down" /></FoldArrow></Fold>
          ))}
        </Side>
        <Dock>
          <DockTab $on aria-label="Assembly navigator"><Icon name="navAsm" /></DockTab>
          <DockTab aria-label="Constraint navigator"><Icon name="navCon" /></DockTab>
          <DockTab aria-label="Reuse library"><Icon name="clip" /></DockTab>
          <DockTab $gap aria-label="Information"><Icon name="info" /></DockTab>
          <DockTab $gap aria-label="Web browser"><Icon name="web" /></DockTab>
          <DockTab $gap aria-label="History"><Icon name="clock" /></DockTab>
          <DockTab aria-label="Roles"><Icon name="roles" /></DockTab>
          <DockTab aria-label="Visualization"><Icon name="spectrum" /></DockTab>
          <DockTab aria-label="Process studio"><Icon name="process" /></DockTab>
          <DockTab aria-label="System scenes"><Icon name="people" /></DockTab>
          <Svg width="28" height="10"><path d="M0 1h28v3q-8-1-14 3T0 5Z" fill="#c4c4c4" /><path d="M0 5q8 5 14 2t14-3" fill="none" stroke="#777" /></Svg>
          <DockNav>
            <button aria-label="First"><Svg width="9" height="9"><path d="M0 1h9M1 8l4-4l4 4Z" fill="#aaa" stroke="#aaa" /></Svg></button>
            <button aria-label="Up"><Svg width="9" height="9"><path d="M1 6l4-4l4 4Z" fill="#aaa" /></Svg></button>
            <button aria-label="Down"><Svg width="9" height="9"><path d="M0 3h9L5 7H4Z" fill="#333" /></Svg></button>
            <button aria-label="Last"><Svg width="9" height="9"><path d="M0 1h9L5 5H4ZM0 7h9v1H0Z" fill="#333" /></Svg></button>
          </DockNav>
        </Dock>
      </Main>
    </Frame>
  );
}
